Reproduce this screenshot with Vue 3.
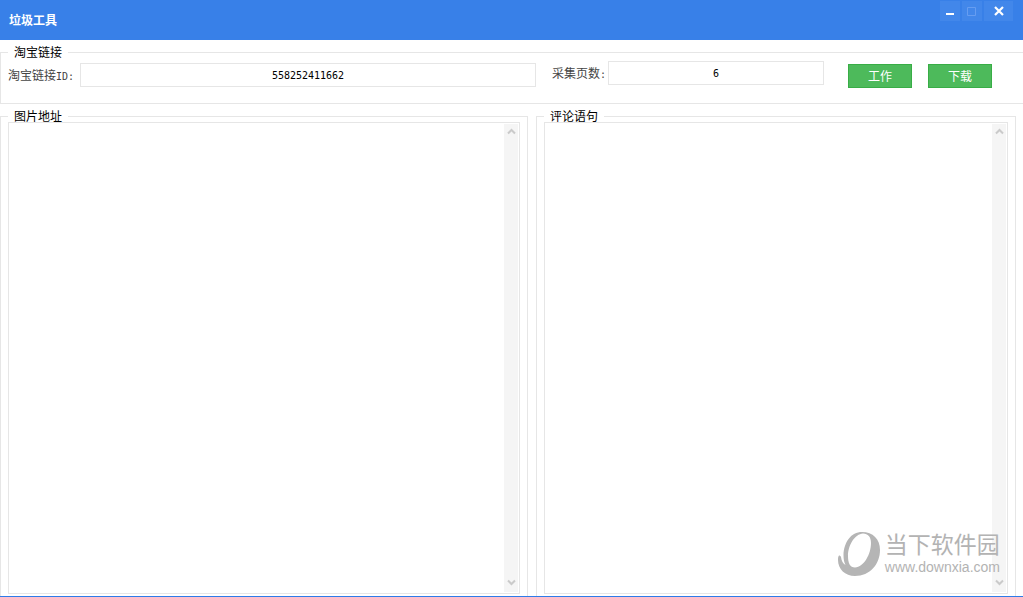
<script setup>
import { ref } from 'vue'

const linkId = ref('558252411662')
const pages = ref('6')
const panels = ref([
  { id: 'images', title: '图片地址', text: '' },
  { id: 'comments', title: '评论语句', text: '' },
])
</script>

<template>
  <div class="window">
    <header class="titlebar">
      <h1>垃圾工具</h1>
      <div class="controls">
        <button type="button" class="control" aria-label="最小化">
          <svg width="12" height="12" viewBox="0 0 12 12"><path d="M2 8h8v2H2z" fill="#fff" /></svg>
        </button>
        <button type="button" class="control" aria-label="最大化" disabled>
          <svg width="12" height="12" viewBox="0 0 12 12"><path d="M1.5 2.5h8v8h-8z" fill="none" stroke="#669df1" /></svg>
        </button>
        <button type="button" class="control close" aria-label="关闭">
          <svg width="12" height="12" viewBox="0 0 12 12"><path d="M2 2l8 8M10 2l-8 8" stroke="#fff" stroke-width="2.2" /></svg>
        </button>
      </div>
    </header>

    <fieldset class="group source">
      <legend>淘宝链接</legend>
      <div class="row">
        <div class="field link-field">
          <label for="link-id">淘宝链接<span class="mono">ID:</span></label>
          <input id="link-id" v-model="linkId" type="text" />
        </div>
        <div class="field page-field">
          <label for="pages">采集页数<span class="mono">:</span></label>
          <input id="pages" v-model="pages" type="text" />
        </div>
        <div class="actions">
          <button type="button">工作</button>
          <button type="button">下载</button>
        </div>
      </div>
    </fieldset>

    <main class="panels">
      <fieldset v-for="panel in panels" :key="panel.id" class="group panel">
        <legend :id="panel.id">{{ panel.title }}</legend>
        <div class="editor">
          <textarea v-model="panel.text" :aria-labelledby="panel.id"></textarea>
          <div class="scrollbar" aria-hidden="true">
            <svg width="9" height="7" viewBox="0 0 9 7"><path d="M1 5.5L4.5 2L8 5.5" /></svg>
            <svg width="9" height="7" viewBox="0 0 9 7"><path d="M1 1.5L4.5 5L8 1.5" /></svg>
          </div>
        </div>
      </fieldset>
    </main>

    <div class="brand">
      <svg width="42" height="44" viewBox="0 0 42 44">
        <path
          fill="#b5b5b5"
          fill-rule="evenodd"
          d="M24 0C35 0 42 7 42 18C42 32 32 44 17 44C7 44 0 37 0 28C0 26 0 25 1 23.5C2 23.5 2.5 24 3 25C3.500 29 5 31.500 7.500 33C6 30 5.500 27 5.500 23C6 10 13 0 24 0ZM25 1.500C17 2 10 13 10 24C10 31 12 35.500 17 35.500C26 35 33 22 33 11C33 5 30 1.500 25 1.500Z"
        />
      </svg>
      <div class="brand-text">
        <span class="brand-name">当下软件园</span>
        <span class="brand-url">www.downxia.com</span>
      </div>
    </div>
  </div>
</template>

<style>
body {
  margin: 0;
}
</style>

<style scoped>
.window {
  position: relative;
  box-sizing: border-box;
  display: flex;
  flex-direction: column;
  height: 100vh;
  border-bottom: 1px solid #2f7be8;
  background: #fff;
  color: #000;
  font: 12px/16px "Liberation Sans", "Noto Sans CJK SC", sans-serif;
  overflow: hidden;
}
.titlebar {
  flex: none;
  display: flex;
  justify-content: space-between;
  height: 40px;
  padding: 0 10px 0 9px;
  background: #3880e8;
}
h1 {
  margin: 0;
  color: #fff;
  font-size: 12px;
  font-weight: 700;
  line-height: 42px;
}
.controls {
  display: flex;
  gap: 2px;
  height: 20px;
  padding-top: 1px;
}
.control {
  display: flex;
  align-items: center;
  justify-content: center;
  width: 20px;
  padding: 0;
  border: 0;
  background: #4287ea;
}
.control.close {
  width: 29px;
}
.group {
  min-width: 0;
  margin: 0;
  padding: 0;
  border: 1px solid #e6e6e6;
}
legend {
  padding: 2px 6px 0;
  line-height: 10px;
}
.source {
  flex: none;
  margin-top: 6px;
  border-right: 0;
}
.source legend {
  margin-left: 7px;
}
.row {
  display: flex;
  align-items: flex-start;
  padding: 3px 31px 15px 7px;
}
.field {
  display: flex;
  align-items: center;
  min-width: 0;
  color: #444;
}
.link-field {
  flex: 33 1 0;
  margin: 2px 16px 0 0;
}
.page-field {
  flex: 17 1 0;
  margin-right: 24px;
}
label {
  flex: none;
  width: 72px;
  padding-top: 2px;
  white-space: nowrap;
}
.page-field label {
  width: 56px;
}
.mono {
  font: 10px/16px "DejaVu Sans Mono", monospace;
}
input {
  flex: 1;
  box-sizing: border-box;
  min-width: 0;
  height: 24px;
  padding: 0;
  border: 1px solid #e6e6e6;
  background: #fff;
  color: #000;
  font: 10px/16px "DejaVu Sans Mono", monospace;
  text-align: center;
}
.actions {
  display: flex;
  gap: 16px;
  padding-top: 3px;
}
.actions button {
  box-sizing: border-box;
  width: 64px;
  height: 24px;
  padding: 2px 0 0;
  border: 1px solid #38ad46;
  background: #4dba5b;
  color: #fff;
  font: inherit;
}
.panels {
  flex: 1;
  display: grid;
  grid-template-columns: 11fr 10fr;
  gap: 8px;
  min-height: 0;
  margin: 6px 7px 0 0;
}
.panel {
  display: flex;
  padding: 0 7px 2px;
  border-bottom: 0;
}
.editor {
  flex: 1;
  display: flex;
  min-width: 0;
  padding: 1px;
  border: 1px solid #e6e6e6;
}
textarea {
  flex: 1;
  min-width: 0;
  padding: 2px;
  border: 0;
  outline: 0;
  background: transparent;
  font: inherit;
  resize: none;
}
.scrollbar {
  display: flex;
  flex-direction: column;
  align-items: center;
  justify-content: space-between;
  width: 14px;
  padding: 4px 0 6px;
  background: #f5f5f5;
}
.scrollbar path {
  fill: none;
  stroke: #cacaca;
  stroke-width: 2;
}
.brand {
  position: absolute;
  right: 23px;
  bottom: 20px;
  display: flex;
  gap: 5px;
  color: #b3b3b3;
  pointer-events: none;
}
.brand-text {
  display: flex;
  flex-direction: column;
}
.brand-name {
  font-size: 23px;
  line-height: 26px;
}
.brand-url {
  font-size: 14px;
  line-height: 18px;
}
</style>
